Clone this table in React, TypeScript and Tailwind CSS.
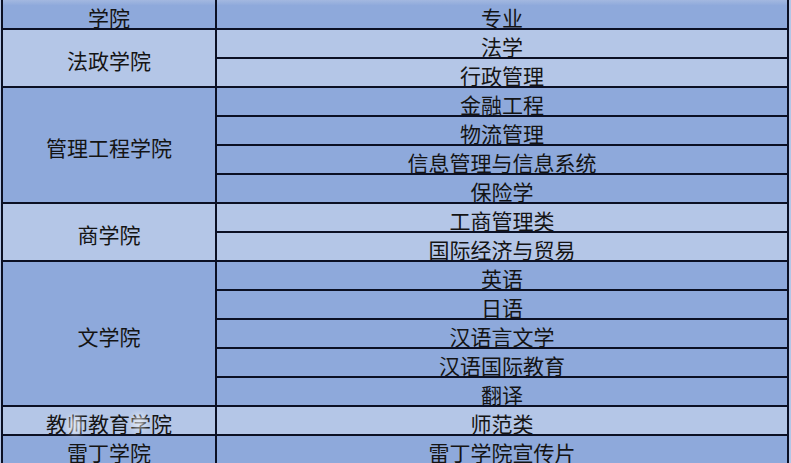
import * as React from "react"

const groups = [
  { name: "法政学院", majors: ["法学", "行政管理"], dark: false },
  {
    name: "管理工程学院",
    majors: ["金融工程", "物流管理", "信息管理与信息系统", "保险学"],
    dark: true,
  },
  { name: "商学院", majors: ["工商管理类", "国际经济与贸易"], dark: false },
  {
    name: "文学院",
    majors: ["英语", "日语", "汉语言文学", "汉语国际教育", "翻译"],
    dark: true,
  },
  { name: "教师教育学院", majors: ["师范类"], dark: false },
  { name: "雷丁学院", majors: ["雷丁学院宣传片"], dark: true },
]

export default function App() {
  return (
    <div
      className="w-[791px] h-[463px] overflow-hidden bg-[#b4c6e7] text-[21px] leading-[20px] text-[#141414]"
      style={{ fontFamily: '"Noto Sans CJK SC", "Noto Sans", sans-serif' }}
    >
      <div className="ml-[1px] w-[788px] h-[463px] flex flex-col gap-[2px] bg-[#0b1024] px-[2px]">
        {/* header */}
        <div className="flex gap-[2px] h-[28px] shrink-0">
          <div className="w-[212px] flex items-center justify-center pt-[5px] bg-[linear-gradient(#a3b8e0,#8ea9db_20%)]">
            学院
          </div>
          <div className="flex-1 flex items-center justify-center pt-[5px] bg-[linear-gradient(#a3b8e0,#8ea9db_20%)]">
            专业
          </div>
        </div>

        {groups.map((g) => (
          <div key={g.name} className="flex gap-[2px] shrink-0">
            <div
              className={`w-[212px] flex items-center justify-center pt-[4px] ${
                g.dark ? "bg-[#8ea9db]" : "bg-[#b4c6e7]"
              }`}
            >
              {g.name === "教师教育学院" ? (
                <span className="relative">
                  教师教育学院
                  <span className="absolute left-[22px] top-[3px] w-[14px] h-[18px] rounded-full bg-white/60 blur-[3px]" />
                  <span className="absolute left-[86px] top-[1px] w-[14px] h-[16px] rounded-full bg-white/60 blur-[3px]" />
                </span>
              ) : (
                g.name
              )}
            </div>
            <div className="flex-1 flex flex-col gap-[2px]">
              {g.majors.map((m) => (
                <div
                  key={m}
                  className={`h-[27px] flex items-center justify-center pt-[5px] ${
                    g.dark ? "bg-[#8ea9db]" : "bg-[#b4c6e7]"
                  }`}
                >
                  {m}
                </div>
              ))}
            </div>
          </div>
        ))}
      </div>
    </div>
  )
}
